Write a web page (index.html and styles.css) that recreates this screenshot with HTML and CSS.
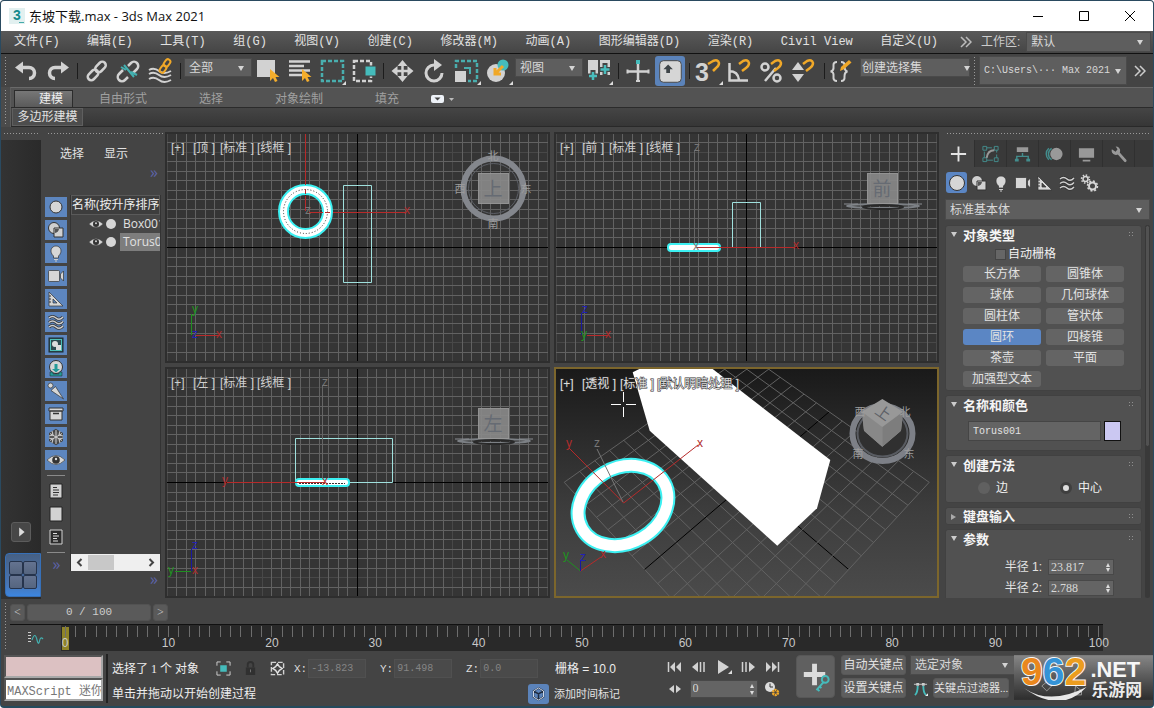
FILE: index.html
```html
<!DOCTYPE html>
<html lang="zh-CN">
<head>
<meta charset="utf-8">
<title>东坡下载.max - 3ds Max 2021</title>
<link rel="stylesheet" href="styles.css">
</head>
<body>
<svg class="defs" aria-hidden="true">
  <defs>
    <symbol id="flyout" viewBox="0 0 32 32"><path d="M30 26v4h-4z" fill="#ddd"/></symbol>
    <symbol id="sphere" viewBox="0 0 20 20"><circle cx="10" cy="10" r="6" fill="#d6d6d6" stroke="#333"/></symbol>
    <symbol id="shapes" viewBox="0 0 20 20"><circle cx="8" cy="8" r="5.500" fill="#d0d0d0" stroke="#333"/><path d="M8 8h9v9H8z" fill="#d0d0d0" stroke="#333"/><path d="M9 9h4a5 5 0 0 1-4 4z" fill="#555"/></symbol>
    <symbol id="bulb" viewBox="0 0 20 20"><path d="M7.500 15v-2C3 9 5 3 10 3s7 6 2.500 10v2z" fill="#d6d6d6" stroke="#333" stroke-width=".7"/><path d="M8 16.500h4M9 18h2" stroke="#ccc" stroke-width="1.200"/></symbol>
    <symbol id="camera" viewBox="0 0 20 20"><rect x="2.500" y="4.500" width="11" height="11" rx="1" fill="#d6d6d6" stroke="#333" stroke-width=".7"/><path d="M14.500 8l3-3v10l-3-3z" fill="#d6d6d6" stroke="#333" stroke-width=".7"/></symbol>
    <symbol id="ruler" viewBox="0 0 20 20"><path d="M3 3l14 14H3zM7 10v4h4z" fill="#d6d6d6" fill-rule="evenodd" stroke="#333" stroke-width=".7"/><path d="M3 7h2M3 10h2M3 13h2" stroke="#333"/></symbol>
    <symbol id="waves" viewBox="0 0 20 20"><path d="M3 6q3.500-3 7 0t7-1M3 10.500q3.500-3 7 0t7-1M3 15q3.500-3 7 0t7-1" fill="none" stroke="#333" stroke-width="3"/><path d="M3 6q3.500-3 7 0t7-1M3 10.500q3.500-3 7 0t7-1M3 15q3.500-3 7 0t7-1" fill="none" stroke="#d0d0d0" stroke-width="1.500"/></symbol>
    <symbol id="gears" viewBox="0 0 20 20"><circle cx="6.500" cy="6" r="2.500" fill="none" stroke="#d6d6d6" stroke-width="1.500"/><circle cx="6.500" cy="6" r="4" fill="none" stroke="#d6d6d6" stroke-width="1.500" stroke-dasharray="1.500 1.600"/><circle cx="13.500" cy="13" r="3.500" fill="none" stroke="#d6d6d6" stroke-width="2"/><circle cx="13.500" cy="13" r="5" fill="none" stroke="#d6d6d6" stroke-width="1.500" stroke-dasharray="2 1.900"/></symbol>
    <symbol id="group" viewBox="0 0 20 20"><rect x="3" y="3" width="14" height="14" fill="#2e4b50" stroke="#1c2c30"/><rect x="4.500" y="4.500" width="11" height="11" fill="none" stroke="#4fc0b8"/><circle cx="9" cy="9" r="3" fill="#ddd"/><path d="M10 10h5v5h-5z" fill="#ddd"/></symbol>
    <symbol id="xref" viewBox="0 0 20 20"><circle cx="10" cy="9" r="6.500" fill="#d6d6d6" stroke="#333"/><path d="M8.500 6h3v5h2.500L10 14.500 6 11h2.500z" fill="#249a98"/><path d="M4 14h3v2h6v-2h3v4H4z" fill="#249a98" stroke="#222" stroke-width=".5"/></symbol>
    <symbol id="bone" viewBox="0 0 20 20"><circle cx="4.500" cy="4.500" r="2.500" fill="#d6d6d6" stroke="#333" stroke-width=".7"/><path d="M5 9.500l4.500-4L17.500 18z" fill="#d6d6d6" stroke="#333" stroke-width=".7"/></symbol>
    <symbol id="box" viewBox="0 0 20 20"><path d="M4 7h12v9H4zM3 4h14v3H3z" fill="#d6d6d6" stroke="#333"/><path d="M7 9.500h6" stroke="#333" stroke-width="1.500"/></symbol>
    <symbol id="flake" viewBox="0 0 20 20"><path d="M10 3l6 3.500v7L10 17l-6-3.500v-7z" fill="#555" stroke="#444" stroke-width="2"/><path d="M10 3v14M4 6.500l12 7M16 6.500l-12 7M6 4l1 4-4 1M14 4l-1 4 4 1M6 16l1-4-4-1M14 16l-1-4 4-1" stroke="#d0d0d0" fill="none"/></symbol>
    <symbol id="eye" viewBox="0 0 20 20"><path d="M1 10q9-9 18 0-9 9-18 0z" fill="#d6d6d6" stroke="#444" stroke-width=".7"/><circle cx="10" cy="10" r="3.800" fill="#333"/><circle cx="10" cy="9" r="1.200" fill="#ddd"/></symbol>
    <symbol id="compass" viewBox="0 0 82 16"><ellipse cx="41" cy="7" rx="36" ry="2" fill="none" stroke="#7c8085" stroke-width="2"/><ellipse cx="41" cy="8" rx="20" ry="2" fill="none" stroke="#292929" stroke-width="2"/><path d="M2 5h14M66 5h14" stroke="#8a8d92"/></symbol>
  </defs>
</svg>

<div class="window">
  <header class="titlebar">
    <svg class="logo" viewBox="0 0 16 16"><rect width="16" height="16" fill="#e2f0f0"/><text x="8" y="12" text-anchor="middle" font-family="Liberation Sans" font-weight="700" font-size="14" fill="#138a8c">3</text><path d="M10 14.500h5" stroke="#4aa"/></svg>
    <h1>东坡下载.max - 3ds Max 2021</h1>
    <button class="win-btn" aria-label="最小化"><svg viewBox="0 0 12 12"><path d="M1 6.500h10" stroke="#000"/></svg></button>
    <button class="win-btn" aria-label="最大化"><svg viewBox="0 0 12 12"><path d="M1.500 1.500h9v9h-9z" fill="none" stroke="#000"/></svg></button>
    <button class="win-btn" aria-label="关闭"><svg viewBox="0 0 12 12"><path d="M1 1l10 10M11 1L1 11" stroke="#000"/></svg></button>
  </header>

  <div class="menubar">
    <nav class="menus"><a href="#">文件(F)</a><a href="#">编辑(E)</a><a href="#">工具(T)</a><a href="#">组(G)</a><a href="#">视图(V)</a><a href="#">创建(C)</a><a href="#">修改器(M)</a><a href="#">动画(A)</a><a href="#">图形编辑器(D)</a><a href="#">渲染(R)</a><a href="#">Civil View</a><a href="#">自定义(U)</a></nav>
    <div class="workspace">
      <svg class="chev" viewBox="0 0 12 12"><path d="M1 1l5 5-5 5M6 1l5 5-5 5" fill="none" stroke="#bbb" stroke-width="1.500"/></svg>
      <label for="ws">工作区:</label>
      <span class="pick"><select id="ws"><option>默认</option></select></span>
    </div>
  </div>

  <div class="toolbar">
    <i class="grip-v"></i>
    <button class="tool" aria-label="撤销"><svg viewBox="0 0 32 32"><path d="M9 12.500h10a5 5 0 0 1 0 11" fill="none" stroke="#d2d2d2" stroke-width="3.500"/><path d="M5 12.500l8-6v12z" fill="#d2d2d2"/></svg></button>
    <button class="tool" aria-label="重做"><svg viewBox="0 0 32 32"><path d="M23 12.500H13a5 5 0 0 0 0 11" fill="none" stroke="#d2d2d2" stroke-width="3.500"/><path d="M27 12.500l-8-6v12z" fill="#d2d2d2"/></svg></button>
    <i class="sep"></i>
    <button class="tool" aria-label="链接"><svg viewBox="0 0 32 32"><g fill="none" stroke="#d2d2d2" stroke-width="2.500"><rect x="-6" y="-3.500" width="12" height="7" rx="3.500" transform="translate(19.500 12) rotate(-45)"/><rect x="-6" y="-3.500" width="12" height="7" rx="3.500" transform="translate(12 20) rotate(-45)"/></g></svg></button>
    <button class="tool" aria-label="取消链接"><svg viewBox="0 0 32 32"><path d="M15 11l3-3a4 4 0 0 1 6 6l-4 4M15 22l-3 3a4 4 0 0 1-6-6l4-4" fill="none" stroke="#d2d2d2" stroke-width="2.500"/><path d="M11 10l10 12M8 12l5 3M18 17l6 3" stroke="#43b0b0" stroke-width="2"/></svg></button>
    <button class="tool" aria-label="绑定到空间扭曲"><svg viewBox="0 0 32 32"><path d="M4 15q5-3 10 1t12 0M4 19q5-3 10 1t12 0M4 24q5-3 10 1t12 0" fill="none" stroke="#d2d2d2" stroke-width="2"/><g fill="none" stroke="#f0a828" stroke-width="2"><rect x="-4" y="-2.500" width="8" height="5" rx="2.500" transform="translate(22 8) rotate(-55)"/><rect x="-4" y="-2.500" width="8" height="5" rx="2.500" transform="translate(18 14) rotate(-55)"/></g></svg></button>
    <i class="sep"></i>
    <span class="pick pick-tool"><select aria-label="选择过滤器"><option>全部</option></select></span>
    <button class="tool" aria-label="选择对象"><svg viewBox="0 0 32 32"><path d="M5 5h18v17H5z" fill="#d2d2d2"/><path d="M18 14v12l3-3 2 4 2.500-1-2-4h4z" fill="#f5ae2c"/></svg></button>
    <button class="tool" aria-label="按名称选择"><svg viewBox="0 0 32 32"><path d="M5 6.500h21M5 11h15M5 15.500h21M5 20h15" stroke="#d2d2d2" stroke-width="2.500"/><path d="M18 14v12l3-3 2 4 2.500-1-2-4h4z" fill="#f5ae2c"/></svg></button>
    <button class="tool" aria-label="矩形选择区域"><svg viewBox="0 0 32 32"><path d="M6 6h21v20H6z" fill="none" stroke="#49aeae" stroke-width="2.500" stroke-dasharray="4 2"/><use href="#flyout"/></svg></button>
    <button class="tool" aria-label="窗口/交叉"><svg viewBox="0 0 32 32"><path d="M6 6h17v20H6z" fill="none" stroke="#d2d2d2" stroke-width="2.500" stroke-dasharray="4 2"/><path d="M17 11h11v10H17z" fill="#45bcbc" stroke="#444"/></svg></button>
    <i class="sep"></i>
    <button class="tool" aria-label="移动"><svg viewBox="0 0 32 32"><path d="M7 16h17M15.500 8v17" stroke="#d2d2d2" stroke-width="2.500"/><path d="M15.500 5l5 6h-10zM15.500 27l5-6h-10zM4.500 16l6-5v10zM26.500 16l-6-5v10z" fill="#d2d2d2"/></svg></button>
    <button class="tool" aria-label="旋转"><svg viewBox="0 0 32 32"><path d="M15 10a8 8 0 1 0 8 8" fill="none" stroke="#d2d2d2" stroke-width="3"/><path d="M15 4l8 6-8 6z" fill="#d2d2d2"/></svg></button>
    <button class="tool" aria-label="缩放"><svg viewBox="0 0 32 32"><path d="M5 13V6h21v20h-9" fill="none" stroke="#49aeae" stroke-width="2.500" stroke-dasharray="4 2"/><path d="M4 16h11v11H4z" fill="#d2d2d2"/><path d="M13 13h6v6" fill="none" stroke="#49aeae" stroke-width="2"/><use href="#flyout"/></svg></button>
    <button class="tool" aria-label="放置"><svg viewBox="0 0 32 32"><circle cx="13" cy="18" r="9" fill="#d2d2d2"/><circle cx="20" cy="10" r="5.500" fill="#45bcbc"/><path d="M20 11l-7 7M12 13v6h6" fill="none" stroke="#f0a828" stroke-width="3"/><use href="#flyout"/></svg></button>
    <span class="pick pick-tool"><select aria-label="参考坐标系"><option>视图</option></select></span>
    <button class="tool" aria-label="使用轴点中心"><svg viewBox="0 0 32 32"><path d="M5 5h10v15H5zM17 5h10v15H17z" fill="#d2d2d2"/><path d="M10 15v13M4 21h12M22 8v13M16 14.500h12" stroke="#444" stroke-width="5"/><path d="M10 17v8M6 21h8M22 10v9M17.500 14.500h9" stroke="#49bcbc" stroke-width="2.500"/><use href="#flyout"/></svg></button>
    <i class="sep"></i>
    <button class="tool" aria-label="选择并操纵"><svg viewBox="0 0 32 32"><path d="M5 16.500h22M16 9v18" stroke="#d2d2d2" stroke-width="2.500"/><path d="M4.500 14.500h2v4h-2zM25.500 14.500h2v4h-2zM14 25h4v2h-4z" fill="#d2d2d2"/><path d="M14 5h4v4h-4z" fill="#45bcbc"/></svg></button>
    <button class="tool on" aria-label="键盘快捷键覆盖"><svg viewBox="0 0 32 32"><rect x="5" y="5" width="23" height="23" rx="4" fill="#d6d6d6" stroke="#444"/><path d="M14 9l5 5h-3v4h-4v-4H9z" fill="#3e4448"/></svg></button>
    <i class="sep"></i>
    <button class="tool" aria-label="捕捉开关"><svg viewBox="0 0 32 32"><text x="2" y="26" font-family="Liberation Sans" font-weight="700" font-size="25" fill="#d2d2d2">3</text><path d="M15 9l5-3q5-2 6 2 0 3-3 5l-3 3" fill="none" stroke="#f0a828" stroke-width="2.500"/><use href="#flyout"/></svg></button>
    <button class="tool" aria-label="角度捕捉"><svg viewBox="0 0 32 32"><path d="M4.500 8v17.500H23M4 16q9 0 10 9" fill="none" stroke="#d2d2d2" stroke-width="2.500"/><path d="M14 9l4-3q5-2 6 2 0 3-3 5l-4 3" fill="none" stroke="#f0a828" stroke-width="2.500"/></svg></button>
    <button class="tool" aria-label="百分比捕捉"><svg viewBox="0 0 32 32"><circle cx="8" cy="12" r="3.500" fill="none" stroke="#d2d2d2" stroke-width="2.500"/><circle cx="20" cy="23" r="3.500" fill="none" stroke="#d2d2d2" stroke-width="2.500"/><path d="M8 26L19 13" stroke="#d2d2d2" stroke-width="2.500"/><path d="M14 9l4-3q5-2 6 2 0 3-3 5l-4 3" fill="none" stroke="#f0a828" stroke-width="2.500"/></svg></button>
    <button class="tool" aria-label="微调器捕捉"><svg viewBox="0 0 32 32"><path d="M3 15l6-8 6 8zM3 19l6 8 6-8z" fill="#d2d2d2"/><path d="M14 9l4-3q5-2 6 2 0 3-3 5l-4 3" fill="none" stroke="#f0a828" stroke-width="2.500"/></svg></button>
    <i class="sep"></i>
    <button class="tool" aria-label="编辑命名选择集"><svg viewBox="0 0 32 32"><path d="M9 7q-4 0-3.500 4 .5 5-3 5.500 3.500 0 3 5Q5 26 9 26M13 7q4 0 3.500 4 0 5 3 5.500-3 .5-3 5 .5 4.500-3.500 4.500" fill="none" stroke="#d2d2d2" stroke-width="2"/><path d="M12 16l1-4 8-7 2.500 2.500-8 7z" fill="#f0a828"/></svg></button>
    <span class="pick pick-set"><select aria-label="命名选择集"><option>创建选择集</option></select></span>
    <i class="grip-v"></i>
    <span class="pick pick-path"><select aria-label="项目路径"><option>C:\Users\··· Max 2021</option></select></span>
    <button class="more" aria-label="更多"><svg class="chev" viewBox="0 0 12 12"><path d="M1 1l5 5-5 5M6 1l5 5-5 5" fill="none" stroke="#ccc" stroke-width="1.500"/></svg></button>
  </div>

  <section class="ribbon">
    <i class="grip-v"></i>
    <div class="ribbon-body">
      <div class="ribbon-tabs">
        <button class="rtab active">建模</button><button class="rtab">自由形式</button><button class="rtab">选择</button><button class="rtab">对象绘制</button><button class="rtab">填充</button>
        <button class="rmin" aria-label="最小化功能区"><svg viewBox="0 0 26 10"><rect x="1" y="1" width="13" height="8" rx="2" fill="#eef2f8"/><path d="M4.500 3.500h6l-3 3z" fill="#444"/><path d="M19 4h5l-2.500 3z" fill="#bbb"/></svg></button>
      </div>
      <div class="ribbon-panel"><button>多边形建模</button></div>
    </div>
  </section>

  <main class="work">
    <aside class="strip">
      <i class="grip-h"></i>
      <div class="strip-body">
        <button class="play" aria-label="展开"><svg viewBox="0 0 20 20"><path d="M8 5l6 5-6 5z" fill="#ddd"/></svg></button>
        <button class="layout" aria-label="视口布局"><i></i><i></i><i></i><i></i></button>
      </div>
    </aside>

    <aside class="explorer">
      <i class="grip-h"></i>
      <div class="ex-menu"><a href="#">选择</a><a href="#">显示</a></div>
      <div class="ex-more">»</div>
      <div class="ex-main">
        <div class="ex-icons">
          <button class="on" aria-label="几何体"><svg><use href="#sphere"/></svg></button>
          <button class="on" aria-label="图形"><svg><use href="#shapes"/></svg></button>
          <button class="on" aria-label="灯光"><svg><use href="#bulb"/></svg></button>
          <button class="on" aria-label="摄影机"><svg><use href="#camera"/></svg></button>
          <button class="on" aria-label="辅助对象"><svg><use href="#ruler"/></svg></button>
          <button class="on" aria-label="空间扭曲"><svg><use href="#waves"/></svg></button>
          <button class="on" aria-label="组"><svg><use href="#group"/></svg></button>
          <button class="on" aria-label="外部参照"><svg><use href="#xref"/></svg></button>
          <button class="on" aria-label="骨骼"><svg><use href="#bone"/></svg></button>
          <button class="on" aria-label="容器"><svg><use href="#box"/></svg></button>
          <button class="on" aria-label="冻结"><svg><use href="#flake"/></svg></button>
          <button class="on" aria-label="隐藏"><svg><use href="#eye"/></svg></button>
          <hr>
          <button aria-label="全部显示"><svg viewBox="0 0 20 20"><path d="M4 3h12v14H4z" fill="#d2d2d2" stroke="#222"/><path d="M7 6.500h4M7 9h6M7 11.500h6M7 14h5" stroke="#333"/></svg></button>
          <button aria-label="不显示"><svg viewBox="0 0 20 20"><path d="M4 3h12v14H4z" fill="#d2d2d2" stroke="#222"/></svg></button>
          <button aria-label="反转显示"><svg viewBox="0 0 20 20"><path d="M4 3h12v14H4z" fill="#2c2c2c" stroke="#d2d2d2"/><path d="M7 6.500h4M7 9h6M7 11.500h4M7 14h5" stroke="#ddd"/></svg></button>
          <hr>
          <span class="ex-chev">»</span>
        </div>
        <div class="ex-list">
          <div class="ex-head">名称(按升序排序)</div>
          <ul>
            <li><svg class="see"><use href="#eye"/></svg><i class="dot"></i><span>Box001</span></li>
            <li class="sel"><svg class="see"><use href="#eye"/></svg><i class="dot"></i><span>Torus001</span></li>
          </ul>
          <div class="hscroll"><button aria-label="左"><svg viewBox="0 0 9 9"><path d="M6.500 1L3 4.500 6.500 8" fill="none" stroke="#444" stroke-width="2"/></svg></button><i></i><button aria-label="右"><svg viewBox="0 0 9 9"><path d="M2.500 1L6 4.500 2.500 8" fill="none" stroke="#444" stroke-width="2"/></svg></button></div>
        </div>
      </div>
      <div class="ex-more low">»</div>
    </aside>

    <section class="views">
      <svg class="view" viewBox="0 0 385 231" preserveAspectRatio="xMidYMid slice">
        <g class="ortho"></g>
        <g class="vc"><circle cx="328.500" cy="56.500" r="30" fill="none" stroke="#84878d" stroke-width="6"/><circle cx="328.500" cy="56.500" r="25" fill="none" stroke="#5c5f66" stroke-width="1"/><rect class="cube" x="313.500" y="41.500" width="30" height="30"/><text class="face" x="328" y="64">上</text><text x="328" y="28">北</text><text x="328" y="96">南</text><text x="295" y="61">西</text><text x="361" y="61">东</text></g>
        <path class="wire" d="M178.500 53.500h28v97h-28z"/>
        <circle cx="140.500" cy="79.500" r="22" fill="none" stroke="#3cf0f2" stroke-width="11"/><circle cx="140.500" cy="79.500" r="22" fill="none" stroke="#fff" stroke-width="7"/><circle cx="140.500" cy="79.500" r="22" fill="none" stroke="#333" stroke-dasharray="1 2"/>
        <path class="red" d="M140.500 2v51M140.500 57v5M140.500 64v15M144 80.500h14M160 80.500h5M168 80.500h73"/><text class="ax r" x="239" y="82">x</text><text class="ax g" x="140" y="82">z</text>
        <path class="grn" d="M26.500 182v21"/><path class="red" d="M31 203.500h23"/><text class="ax n" x="27" y="181">y</text><text class="ax b" x="27" y="206">z</text><text class="ax r" x="51" y="206">x</text>
        <text class="vl" y="20"><tspan x="6">[+]</tspan><tspan x="28">[顶 ]</tspan><tspan x="55">[标准 ]</tspan><tspan x="92">[线框 ]</tspan></text>
      </svg>
      <svg class="view" viewBox="0 0 385 231" preserveAspectRatio="xMidYMid slice">
        <g class="ortho"></g>
        <g class="vc"><use href="#compass" x="288" y="67" width="82" height="16"/><rect class="cube" x="313.500" y="41.500" width="30" height="30"/><text class="face" x="328" y="64">前</text></g>
        <path class="wire" d="M178.500 115V70.500h28V115"/>
        <path d="M140.500 18v94" stroke="#666"/><text class="ax g" x="140" y="19">z</text>
        <rect x="114" y="112" width="52" height="7" rx="3" fill="#fff" stroke="#3cf0f2" stroke-width="2"/>
        <path class="red" d="M142 115.500h99"/><text class="ax r" x="239" y="117">x</text><text class="ax g" x="139" y="118">x</text>
        <path d="M27.500 181v22" stroke="#1818a0"/><path class="red" d="M33 203.500h21"/><text class="ax b" x="28" y="181">z</text><text class="ax n" x="27" y="206">y</text><text class="ax r" x="51" y="206">x</text>
        <text class="vl" y="20"><tspan x="6">[+]</tspan><tspan x="28">[前 ]</tspan><tspan x="55">[标准 ]</tspan><tspan x="92">[线框 ]</tspan></text>
      </svg>
      <svg class="view" viewBox="0 0 385 231" preserveAspectRatio="xMidYMid slice">
        <g class="ortho"></g>
        <g class="vc"><use href="#compass" x="288" y="67" width="82" height="16"/><rect class="cube" x="313.500" y="41.500" width="30" height="30"/><text class="face" x="328" y="64">左</text></g>
        <path class="wire" d="M130.500 71.500h97v44h-97z"/>
        <path d="M157.500 18v94" stroke="#666"/><text class="ax g" x="157" y="19">z</text>
        <rect x="131" y="112" width="53" height="7" rx="3" fill="#fff" stroke="#3cf0f2" stroke-width="2"/><path d="M134 116.500h46" stroke="#333" stroke-dasharray="2 1"/>
        <path class="red" d="M62 115.500h98"/><text class="ax r" x="57" y="117">y</text><text class="ax r" x="157" y="118">x</text>
        <path d="M26.500 182v22" stroke="#1818a0"/><path class="grn" d="M10 204.500h16"/><text class="ax b" x="27" y="182">z</text><text class="ax n" x="3" y="207">y</text><text class="ax r" x="27" y="207">x</text>
        <text class="vl" y="20"><tspan x="6">[+]</tspan><tspan x="28">[左 ]</tspan><tspan x="55">[标准 ]</tspan><tspan x="92">[线框 ]</tspan></text>
      </svg>
      <svg class="view current" viewBox="0 0 385 231" preserveAspectRatio="xMidYMid slice">
        <defs><linearGradient id="sky" x2="0" y2="1"><stop stop-color="#191919"/><stop offset=".6" stop-color="#3c3c3c"/><stop offset="1" stop-color="#4b4b4b"/></linearGradient></defs>
        <rect width="385" height="231" fill="url(#sky)"/>
        <g id="persp"></g>
        <path d="M78.700 5.300L85.300 2h73.400L276.300 93 263 141.300l-39.700 37.400L95.700 63.700z" fill="#fff"/>
        <g fill="none" transform="rotate(-30 69 138.500)"><path d="M15.500 138.500a53.500 44 0 1 1 107 0a53.500 44 0 1 1-107 0zM28.500 138.500a40.500 31 0 1 0 81 0a40.500 31 0 1 0-81 0z" fill="#fff" fill-rule="evenodd" stroke="#3cf0f2" stroke-width="2"/></g>
        <path class="red" d="M15 81l54.700 55L144 78"/><path d="M43 82l26 53" stroke="#777"/>
        <text class="ax r" x="12" y="80">y</text><text class="ax g" x="40" y="80">z</text><text class="ax r" x="143" y="80">x</text>
        <path class="grn" d="M26.500 204L13 193"/><path class="red" d="M26.500 204L47 190"/><path d="M26.500 204v-11" stroke="#1818a0"/>
        <text class="ax n" x="9" y="192">y</text><text class="ax b" x="26" y="194">z</text><text class="ax r" x="46" y="191">x</text>
        <ellipse cx="328.500" cy="66.500" rx="25" ry="23" fill="#303030" stroke="#595c62" stroke-width="2"/><ellipse cx="328.500" cy="66.500" rx="30" ry="27.500" fill="none" stroke="#7d8087" stroke-width="6"/>
        <path d="M328.300 32l20.700 12.700-2 19-18.700 16-18.300-16-2-19z" fill="#989898"/><path d="M308 44.700l20.300 15.300v19.700L310 63.700z" fill="#888"/><path d="M349 44.700L328.300 60v19.700l18.700-16z" fill="#7d7d7d"/>
        <g class="vc"><text x="306" y="49">西</text><text x="351" y="49">北</text><text x="304" y="91">南</text><text x="355" y="91">东</text><text class="top" x="0" y="5" transform="translate(329 46) rotate(35)">上</text></g>
        <g fill="none" stroke="#222" stroke-width="3"><path d="M57 37.500h10M72 37.500h10M69.500 25v10M69.500 40v10"/></g><path d="M57 37.500h10M72 37.500h10M69.500 25v10M69.500 40v10" stroke="#fff"/>
        <text class="vl hard" y="21"><tspan x="6">[+]</tspan><tspan x="28">[透视 ]</tspan><tspan x="66">[标准 ]</tspan><tspan x="103">[默认明暗处理 ]</tspan></text>
      </svg>
    </section>

    <aside class="command">
      <i class="grip-h"></i>
      <div class="cmd-tabs">
        <button class="active" aria-label="创建"><svg viewBox="0 0 20 20"><path d="M10 2v16M2 10h16" stroke="#e4e4e4" stroke-width="2"/></svg></button>
        <button aria-label="修改"><svg viewBox="0 0 20 20"><path d="M3.500 3.500h13v13h-13z" fill="none" stroke="#438d8d" stroke-dasharray="8 2"/><path d="M2 2h4v4H2zM14 2h4v4h-4zM2 14h4v4H2zM14 14h4v4h-4z" fill="#3a3a3a" stroke="#438d8d"/><path d="M6 14q1-8 8-8" fill="none" stroke="#999" stroke-width="2"/></svg></button>
        <button aria-label="层次"><svg viewBox="0 0 20 20"><path d="M4 3h12v5H4z" fill="#999"/><path d="M10 9v3M4 16v-3.500h12V16" fill="none" stroke="#438d8d" stroke-width="1.500"/><path d="M2 15h4v3H2zM14 15h4v3h-4z" fill="#438d8d"/></svg></button>
        <button aria-label="运动"><svg viewBox="0 0 20 20"><circle cx="12" cy="10" r="6.500" fill="#999"/><path d="M7 4a7 7 0 0 0 0 12M4 4a8 8 0 0 0 0 12" fill="none" stroke="#438d8d" stroke-width="1.500"/></svg></button>
        <button aria-label="显示"><svg viewBox="0 0 20 20"><path d="M2 4h16v10H2zM6 16h8v2H6z" fill="#999"/></svg></button>
        <button aria-label="实用程序"><svg viewBox="0 0 20 20"><path d="M9 8l8 9" stroke="#999" stroke-width="3" stroke-linecap="round"/><path d="M3 5a4.500 4.500 0 1 0 4-3l2 3-2 2.500z" fill="#999"/></svg></button>
      </div>
      <div class="cmd-cats">
        <button class="on" aria-label="几何体"><svg viewBox="0 0 20 20"><circle cx="10" cy="10" r="7.500" fill="#d6d6d6" stroke="#333"/></svg></button>
        <button aria-label="图形"><svg><use href="#shapes"/></svg></button>
        <button aria-label="灯光"><svg><use href="#bulb"/></svg></button>
        <button aria-label="摄影机"><svg><use href="#camera"/></svg></button>
        <button aria-label="辅助对象"><svg><use href="#ruler"/></svg></button>
        <button aria-label="空间扭曲"><svg><use href="#waves"/></svg></button>
        <button aria-label="系统"><svg><use href="#gears"/></svg></button>
      </div>
      <span class="pick pick-cat"><select aria-label="类别"><option>标准基本体</option></select></span>
      <div class="cmd-scroll">
        <div class="rollouts">
          <section class="rollout">
            <h2>对象类型</h2>
            <label class="auto"><input type="checkbox">自动栅格</label>
            <div class="prims"><button>长方体</button><button>圆锥体</button><button>球体</button><button>几何球体</button><button>圆柱体</button><button>管状体</button><button class="on">圆环</button><button>四棱锥</button><button>茶壶</button><button>平面</button><button>加强型文本</button></div>
          </section>
          <section class="rollout">
            <h2>名称和颜色</h2>
            <div class="name-row"><input type="text" value="Torus001" aria-label="名称"><button aria-label="颜色"></button></div>
          </section>
          <section class="rollout">
            <h2>创建方法</h2>
            <div class="radios"><label><input type="radio" name="m">边</label><label><input type="radio" name="m" checked>中心</label></div>
          </section>
          <section class="rollout shut"><h2>键盘输入</h2></section>
          <section class="rollout last">
            <h2>参数</h2>
            <div class="params">
              <label for="r1">半径 1:</label><span class="spin"><input id="r1" type="text" value="23.817"></span>
              <label for="r2">半径 2:</label><span class="spin"><input id="r2" type="text" value="2.788"></span>
            </div>
          </section>
        </div>
        <div class="vbar"><i></i></div>
      </div>
    </aside>
  </main>

  <div class="time">
    <i class="grip-v"></i>
    <div class="slider"><button aria-label="上一帧">&lt;</button><button class="thumb">0 / 100</button><button aria-label="下一帧">&gt;</button></div>
    <div class="track">
      <button class="curve" aria-label="曲线编辑器"><svg viewBox="0 0 18 14"><path d="M2.500 1v12" stroke="#ccc" stroke-width="3" stroke-dasharray="1 2"/><path d="M5 9q3-9 5 0 1.500 6 2.500 1t3.500-2" fill="none" stroke="#43b0b0" stroke-width="1.200"/></svg></button>
      <svg class="ticks" id="ticks"></svg>
    </div>
  </div>

  <footer class="status">
    <div class="listener"><div class="rec"></div><input type="text" value="MAXScript 迷你" aria-label="侦听器"></div>
    <div class="info">
      <div class="row">
        <span class="selinfo">选择了 1 个 对象</span>
        <svg class="ico" viewBox="0 0 16 16"><path d="M1 5V1h4M11 1h4v4M15 11v4h-4M5 15H1v-4" fill="none" stroke="#d2d2d2"/><path d="M4.500 4.500h7v7h-7z" fill="#45bcbc"/></svg>
        <svg class="ico" viewBox="0 0 16 16"><path d="M3 7h10v8H3z" fill="#303030"/><path d="M5 7V4q0-3 3-3t3 3v3" fill="none" stroke="#303030" stroke-width="2"/><path d="M8 9v3" stroke="#777"/></svg>
        <svg class="ico" viewBox="0 0 16 16"><path d="M1.500 1.500h13v13h-13z" fill="none" stroke="#d2d2d2" stroke-width="1.500" stroke-dasharray="5 2"/><path d="M8 3l2 3 3 2-3 2-2 3-2-3-3-2 3-2z" fill="none" stroke="#e2e2e2" stroke-width="1.500"/></svg>
        <label>X: <input type="text" value="-13.823"></label><label>Y: <input type="text" value="91.498"></label><label>Z: <input type="text" value="0.0"></label>
        <span class="grid">栅格 = 10.0</span>
      </div>
      <div class="row">
        <span class="prompt">单击并拖动以开始创建过程</span>
        <button class="tagbtn" aria-label="时间标记"><svg viewBox="0 0 20 20"><path d="M10 4l5 3v6l-5 3-5-3V7zM5 7l5 3 5-3M10 10v6" fill="none" stroke="#1f2c40" stroke-width="1.500"/><path d="M10 4l5 3v6l-5 3-5-3V7z" fill="none" stroke="#cdd6e4"/></svg></button>
        <a class="tag" href="#">添加时间标记</a>
      </div>
    </div>
    <div class="playback">
      <div class="row">
        <button aria-label="转至开头"><svg viewBox="0 0 16 16"><path d="M1.500 3v10" stroke="#d2d2d2" stroke-width="1.500"/><path d="M8 3v10L3 8zM14 3v10L9 8z" fill="#d2d2d2"/></svg></button>
        <button aria-label="上一帧"><svg viewBox="0 0 16 16"><path d="M7 3v10L1 8z" fill="#d2d2d2"/><path d="M9.500 3v10M13 3v10" stroke="#d2d2d2" stroke-width="1.500"/></svg></button>
        <button aria-label="播放"><svg viewBox="0 0 16 16"><path d="M2 1v14l11-7z" fill="#d2d2d2"/><path d="M16 11v4h-4z" fill="#ddd"/></svg></button>
        <button aria-label="下一帧"><svg viewBox="0 0 16 16"><path d="M9 3v10l6-5z" fill="#d2d2d2"/><path d="M2.500 3v10M6 3v10" stroke="#d2d2d2" stroke-width="1.500"/></svg></button>
        <button aria-label="转至结尾"><svg viewBox="0 0 16 16"><path d="M14.500 3v10" stroke="#d2d2d2" stroke-width="1.500"/><path d="M8 3v10l5-5zM2 3v10l5-5z" fill="#d2d2d2"/></svg></button>
      </div>
      <div class="row">
        <button aria-label="关键点模式"><svg viewBox="0 0 16 16"><path d="M7 4v8L2 8zM9 4v8l5-4z" fill="#d2d2d2"/></svg></button>
        <span class="spin frame"><input type="text" value="0" aria-label="当前帧"></span>
        <button aria-label="时间配置"><svg viewBox="0 0 16 16"><circle cx="6" cy="6" r="5" fill="#ddd"/><path d="M6 2.500V6h3" stroke="#333" fill="none"/><circle cx="11.500" cy="11.500" r="2.500" fill="#444" stroke="#f0a828" stroke-width="2.500" stroke-dasharray="2 .6"/></svg></button>
      </div>
    </div>
    <button class="bigkey" aria-label="设置关键点"><svg viewBox="0 0 38 42"><path d="M18 8v22M7 19h22" stroke="#dcdcdc" stroke-width="5"/><circle cx="29" cy="24" r="3.500" fill="none" stroke="#45bcbc" stroke-width="2"/><path d="M27 27l-7 8M21 34l2 2M23 31l2 2" stroke="#45bcbc" stroke-width="2"/></svg></button>
    <div class="keys"><button>自动关键点</button><button>设置关键点</button></div>
    <div class="filters">
      <span class="pick"><select aria-label="关键点集"><option>选定对象</option></select></span>
      <div class="row"><svg class="ico" viewBox="0 0 16 16"><path d="M2 15q3-2 3-10M14 15q-3-2-3-10" stroke="#45bcbc" fill="none" stroke-width="2"/><path d="M1 3.500h14" stroke="#ccc"/><path d="M3.500 2h3v3h-3zM9.500 2h3v3h-3z" fill="#ccc"/><path d="M16 13v3h-3z" fill="#eee"/></svg><button>关键点过滤器...</button></div>
    </div>
    <svg class="brand" viewBox="0 0 140 45">
      <defs><linearGradient id="plate" x2="0" y2="1"><stop stop-color="#8a8a8a"/><stop offset=".5" stop-color="#5a5a5a"/><stop offset="1" stop-color="#2d2d2d"/></linearGradient></defs>
      <rect width="140" height="45" fill="url(#plate)"/>
      <path d="M28 31l5-4 5 4-5 5zM62 31l6 5v4h-7z" fill="none" stroke="#999"/>
      <g font-family="Liberation Sans" font-weight="700"><g font-size="39" stroke="#fff" stroke-width="2" paint-order="stroke"><text x="7" y="30" fill="#f08a1c">9</text><text x="29" y="30" fill="#3597dc">6</text><text x="51" y="30" fill="#f3a11e">2</text></g><text x="77" y="22" font-size="22" fill="#fff">.NET</text></g>
      <path d="M10 33q26 18 63-1-26 28-63 1z" fill="#eee"/>
      <text x="78" y="41" font-family="Noto Sans CJK SC" font-weight="700" font-size="17" fill="#f2f2f2">乐游网</text>
    </svg>
  </footer>
</div>
<script src="scene.js"></script>
</body>
</html>
```
FILE: scene.js
```js
const NS = 'http://www.w3.org/2000/svg';

function add(parent, tag, attrs, text) {
  const node = document.createElementNS(NS, tag);
  for (const key in attrs) node.setAttribute(key, attrs[key]);
  if (text !== undefined) node.textContent = text;
  parent.appendChild(node);
  return node;
}

// Home grid of the orthographic viewports: every tenth line is dimmer.
document.querySelectorAll('.ortho').forEach(g => {
  const step = 9.52;
  let minor = '', major = '';
  for (let i = -20; i <= 20; i++) {
    if (i === 0) continue;
    const x = Math.round(192 + i * step) + 0.5;
    const y = Math.round(115 + i * step) + 0.5;
    let d = `M${x} 2V229`;
    if (y > 2 && y < 229) d += `M2 ${y}H383`;
    if (i % 10 === 0) major += d; else minor += d;
  }
  add(g, 'path', { d: major, stroke: '#484848' });
  add(g, 'path', { d: minor, stroke: '#626262' });
  add(g, 'path', { d: 'M192.5 2V229M2 115.5H383', stroke: '#000' });
});

// Perspective grid, 14 by 14 cells, seen along its diagonal.
const project = (i, j) => {
  const side = (i + j) / 14, depth = (i - j) / 14, w = 1 + 0.2114 * depth;
  return `${((584 + 547.5 * side / w) / 3 - 2).toFixed(1)} ${((352 - 393.2 * depth) / w / 3 - 2).toFixed(1)}`;
};
const persp = document.getElementById('persp');
for (let i = -7; i <= 7; i++) {
  const stroke = i === 0 ? '#000' : '#626262';
  add(persp, 'path', { d: `M${project(i, -7)}L${project(i, 7)}M${project(-7, i)}L${project(7, i)}`, stroke });
}

// Frame ticks and labels of the track bar.
const ticks = document.getElementById('ticks');
const at = f => (0.4 + f * 0.992).toFixed(3) + '%';
add(ticks, 'rect', { x: 1, y: 2, width: 7, height: 23, fill: '#8f8428' });
for (let f = 0; f <= 100; f++) {
  add(ticks, 'line', { x1: at(f), x2: at(f), y1: 1, y2: 12, stroke: '#6d6d6d' });
  if (f % 10 === 0) add(ticks, 'text', { x: at(f), y: 22, 'text-anchor': 'middle' }, f);
}
```
FILE: styles.css
```css
* { box-sizing: border-box; }
body { margin: 0; background: #fff; }
button, input, select { font: inherit; color: inherit; margin: 0; padding: 0; border: 0; border-radius: 0; background: none; }
a { color: inherit; text-decoration: none; }
i { display: block; flex: none; }
svg { display: block; flex: none; }
.defs { position: absolute; width: 0; height: 0; }

.window {
  min-height: 100vh; display: flex; flex-direction: column;
  border: 1px solid #2a4a60; border-bottom: 2px solid #244a5c; border-radius: 4px; overflow: hidden;
  background: #444; color: #e2e2e2;
  font: 12px/16px "Liberation Serif", "Noto Sans CJK SC", serif;
}

.titlebar { height: 30px; display: flex; align-items: center; background: #fff; color: #111; padding-left: 8px; }
.logo { width: 16px; height: 16px; margin-right: 4px; }
.titlebar h1 { flex: 1; margin: 0; font: 13px/16px "Open Sans", "Noto Sans CJK SC", sans-serif; }
.win-btn { width: 46px; height: 28px; display: grid; place-items: center; }
.win-btn svg { width: 12px; height: 12px; }

.menubar {
  height: 23px; display: flex; align-items: center; padding-left: 13px;
  background: linear-gradient(#595959, #454545); border-bottom: 1px solid #111; white-space: nowrap;
  font: 12px/18px "Liberation Mono", "Noto Sans CJK SC", monospace;
}
.menus { flex: 0 0 924px; display: flex; justify-content: space-between; }
.workspace { flex: 1; margin-left: 22px; display: flex; align-items: center; font-family: "Liberation Sans", "Noto Sans CJK SC", sans-serif; }
.chev { width: 12px; height: 12px; }
.workspace label { margin: 0 6px 0 9px; color: #ccc; }
.workspace .pick { flex: 1; height: 20px; margin-right: 2px; }

.pick { position: relative; display: block; background: #5e5e5e; border: 1px solid #4a4a4a; }
.pick select { display: block; width: 100%; height: 100%; padding-left: 4px; appearance: none; color: #d8d8d8; }
.pick::after { content: ""; position: absolute; right: 7px; top: calc(50% - 2px); border: 3px solid transparent; border-top: 5px solid #d4d4d4; border-bottom: 0; pointer-events: none; }

.grip-v { width: 9px; align-self: stretch; margin: 2px 0; background: radial-gradient(#999 1px, transparent 1px) 3px 0 / 3px 3px content-box; padding: 0 3px; }
.grip-h { height: 4px; margin: 5px 2px 4px; background: radial-gradient(#999 1px, transparent 1px) 0 0 / 3px 3px; }

.toolbar { height: 33px; display: flex; align-items: center; background: #444; white-space: nowrap; }
.tool { flex: none; width: 32px; height: 32px; }
.tool svg { width: 32px; height: 32px; }
.tool.on { padding: 1px; }
.tool.on svg { width: 30px; height: 30px; background: #5b83ba; border-radius: 3px; }
.sep { width: 7px; height: 16px; background: linear-gradient(#1c1c1c, #1c1c1c) center / 1px 100% no-repeat; }
.pick-tool { flex: none; width: 68px; height: 19px; margin-bottom: 6px; }
.pick-set { flex: none; width: 110px; height: 19px; margin-bottom: 6px; }
.pick-set select { padding-left: 1px; }
.pick-set::after { right: -1px; }
.pick-path { flex: none; width: 148px; height: 29px; font: 10px/16px "Liberation Mono", monospace; }
.pick-path::after { right: 5px; }
.more { flex: 1; display: grid; place-items: center; }

.ribbon { height: 40px; display: flex; background: #4b4b4b; }
.ribbon-body { flex: 1; border-top: 1px solid #6a6a6a; border-left: 1px solid #5d5d5d; }
.ribbon-tabs { height: 20px; display: flex; align-items: flex-end; background: #535353; border-bottom: 1px solid #2b2b2b; color: #a0a0a0; padding-left: 3px; }
.rtab { height: 17px; padding: 0 1px; margin-right: 50px; line-height: 16px; }
.rtab.active { width: 59px; padding-left: 16px; margin-right: 25px; background: linear-gradient(#777, #5a5a5a); border: 1px solid #2c2c2c; border-bottom: 0; color: #eee; }
.rmin { height: 17px; margin-left: -20px; }
.rmin svg { width: 26px; height: 10px; }
.ribbon-panel { height: 19px; background: linear-gradient(#454545, #363636); border-bottom: 1px solid #292929; }
.ribbon-panel button { height: 18px; width: 71px; margin-left: 1px; background: #4d4d4d; border: 1px solid #5f5f5f; line-height: 16px; }

.work { flex: 1; display: flex; min-height: 460px; }

.strip { width: 40px; display: flex; flex-direction: column; }
.strip-body { flex: 1; display: flex; flex-direction: column; justify-content: flex-end; align-items: flex-end; gap: 11px; background: linear-gradient(90deg, #333, #2a2a2a); padding-bottom: 2px; margin-bottom: 1px; }
.play { width: 20px; height: 20px; margin-right: 10px; background: #474747; border: 1px solid #5c5c5c; border-radius: 3px; }
.play svg { width: 18px; height: 18px; }
.layout { width: 36px; height: 44px; padding: 7px 3px; display: grid; grid-template: 1fr 1fr / 1fr 1fr; background: linear-gradient(#466084, #4a74b0 70%, #3c86e0); border-radius: 4px 0 0 4px; border: 1px solid #3670b8; }
.layout i { background: linear-gradient(#647390, #55657f); border: 1px solid #26344c; border-radius: 2px; }

.explorer { width: 124px; display: flex; flex-direction: column; padding-left: 4px; font-family: "Open Sans", "Noto Sans CJK SC", sans-serif; }
.ex-menu { display: flex; gap: 20px; padding: 6px 0 0 15px; }
.ex-more { text-align: right; color: #5c63a8; font-size: 16px; padding: 2px 7px 12px 0; line-height: 16px; }
.ex-main { flex: 1; display: flex; gap: 2px; padding-top: 3px; }
.ex-more.low { height: 29px; padding: 0 7px 0 0; }
.ex-icons { width: 23px; height: 366px; display: flex; flex-direction: column; gap: 3px; padding-top: 2px; }
.ex-icons button { width: 22px; height: 20px; flex: none; display: grid; place-items: center; }
.ex-icons button.on { background: #5d86bf; }
.ex-icons svg { width: 20px; height: 20px; }
.ex-icons hr { width: 18px; margin: 2px; border: 0; border-top: 1px solid #8a8a8a; }
.ex-chev { text-align: center; color: #5c63a8; font-size: 16px; line-height: 12px; }
.ex-list { width: 91px; display: flex; flex-direction: column; border: solid #333; border-width: 0 1px; }
.ex-head { height: 20px; overflow: hidden; white-space: nowrap; line-height: 18px; border: 1px solid #5a5a5a; background: #3d3d3d; color: #eee; }
.ex-list ul { margin: 0; padding: 0; list-style: none; flex: 1; overflow: hidden; }
.ex-list li { height: 18px; display: flex; align-items: center; padding-left: 17px; }
.see { width: 16px; height: 16px; }
.see use { width: 16px; height: 16px; }
.dot { width: 10px; height: 10px; margin: 0 4px 0 2px; border-radius: 50%; background: #d6d6d6; }
.ex-list li span { flex: 1; min-width: 0; overflow: hidden; white-space: nowrap; padding-left: 3px; line-height: 18px; background: #474747; }
.ex-list li.sel span { background: #7d7d7d; }
.hscroll { height: 17px; display: flex; align-items: center; background: #efefef; }
.hscroll button { width: 17px; height: 17px; display: grid; place-items: center; }
.hscroll svg { width: 9px; height: 9px; }
.hscroll i { width: 26px; height: 15px; background: #c8c8c8; margin-right: auto; }

.views { flex: 1; min-width: 0; display: grid; grid-template: 1fr 1fr / 1fr 1fr; gap: 4px; padding: 5px 0 2px; }
.view { width: 100%; height: 100%; min-height: 0; background: #353535; outline: 2px solid #2e2e2e; outline-offset: -2px; }
.view.current { outline-color: #7c662c; }
.view text { font-family: "Liberation Sans", "Noto Sans CJK SC", sans-serif; }
.vl { font-size: 12px; fill: #d0d0d0; }
.vl.hard { stroke: #333; stroke-width: 1px; paint-order: stroke; fill: #ddd; }
.ax { font-size: 12px; }
.ax.r { fill: #b02c2c; }
.ax.g { fill: #777; }
.ax.b { fill: #2020b8; }
.ax.n { fill: #1f9320; }
.red { fill: none; stroke: #b82a2a; }
.grn { fill: none; stroke: #1f8f20; }
.wire { fill: none; stroke: #9fe0dd; }
.vc text { text-anchor: middle; font-size: 11px; fill: #9c9c9c; }
.vc .face { font-size: 19px; fill: #666b73; }
.vc .top { font-size: 15px; fill: #5d6066; }
.cube { fill: #888; stroke: #9a9a9a; opacity: .92; }

.command { width: 214px; display: flex; flex-direction: column; padding-left: 5px; }
.cmd-tabs { height: 27px; display: flex; background: #393939; }
.cmd-tabs button { width: 32px; padding: 4px 6px 3px; border-right: 1px solid #303030; }
.cmd-tabs button.active { width: 31px; background: #444; padding-left: 5px; }
.cmd-tabs svg { width: 19px; height: 20px; }
.cmd-cats { display: flex; gap: 1px; padding: 5px 2px 6px; }
.cmd-cats button { width: 21px; height: 21px; border-radius: 3px; display: grid; place-items: center; }
.cmd-cats button.on { background: #5b86c4; }
.cmd-cats svg { width: 20px; height: 20px; }
.pick-cat { height: 21px; margin: 0 3px 5px 1px; }
.cmd-scroll { flex: 1 1 0; min-height: 0; display: flex; gap: 3px; padding: 0 3px 0 1px; margin-bottom: 2px; overflow: hidden; }
.rollouts { flex: 1; display: flex; flex-direction: column; gap: 4px; }
.rollout { background: #515151; border: 1px solid #414141; border-radius: 3px; padding-bottom: 3px; }
.rollout h2 { margin: 0; height: 18px; padding-left: 17px; font: 700 13px/18px "Noto Sans CJK SC", sans-serif; color: #f5f5f5; position: relative; }
.rollout h2::before { content: ""; position: absolute; left: 5px; top: 6px; border: 3px solid transparent; border-top: 5px solid #ccc; border-bottom: 0; }
.rollout.shut h2::before { border: 3px solid transparent; border-left: 5px solid #aaa; border-right: 0; }
.rollout h2::after { content: ""; position: absolute; right: 7px; top: 5px; width: 6px; height: 6px; background: radial-gradient(#aaa 1px, transparent 1px) 0 0 / 3px 3px; opacity: .7; }
.rollout.shut { padding-bottom: 0; }
.rollout.shut h2 { height: 16px; line-height: 16px; }
.auto { display: flex; align-items: center; gap: 2px; margin: 2px 0 4px 49px; line-height: 16px; color: #f0f0f0; }
.auto input { appearance: none; width: 11px; height: 11px; background: #666; border: 1px solid #444; }
.prims { display: grid; grid-template-columns: 78px 78px; gap: 5px; padding-left: 17px; }
.prims button { height: 16px; line-height: 15px; background: #646464; border-radius: 3px; color: #e2e2e2; }
.prims button.on { background: #5b86c4; }
.name-row { display: flex; gap: 3px; padding: 7px 20px 6px 22px; }
.name-row input { flex: 1; min-width: 0; height: 20px; padding-left: 4px; background: #646464; border: 1px solid #454545; font-family: "Liberation Mono", monospace; font-size: 10px; }
.name-row button { width: 17px; height: 20px; background: #cbc8f2; border: 1px solid #111; }
.radios { display: flex; gap: 52px; padding: 6px 0 3px 32px; color: #f0f0f0; }
.radios label { display: flex; align-items: center; gap: 6px; }
.radios input { appearance: none; width: 12px; height: 12px; border-radius: 50%; background: #606060; }
.radios input:checked { background: #ddd; border: 3px solid #3f3f3f; }
.rollout.last { padding-bottom: 0; height: 80px; flex: none; }
.params { display: grid; grid-template-columns: auto 66px; justify-content: end; gap: 5px 6px; padding: 11px 27px 0 0; line-height: 16px; }
.params label { font-family: "Liberation Sans", "Noto Sans CJK SC", sans-serif; }
.spin { position: relative; height: 16px; background: #646464; border: 1px solid #484848; }
.spin input { display: block; width: 100%; height: 14px; padding-left: 2px; color: #d8d8d8; }
.spin::before, .spin::after { content: ""; position: absolute; right: 3px; border: 2px solid transparent; }
.spin::before { top: 3px; border-bottom: 4px solid #ddd; border-top: 0; }
.spin::after { bottom: 2px; border-top: 4px solid #ddd; border-bottom: 0; }
.vbar { width: 6px; background: #393939; border-radius: 3px; }
.vbar i { height: 222px; background: #515151; border: 1px solid #383838; border-radius: 3px; }

.time { height: 51px; display: grid; grid-template: 24px 27px / 9px 1fr; }
.time > .grip-v { grid-row: 1 / 3; }
.slider { display: flex; gap: 2px; align-items: center; }
.slider button { width: 15px; height: 17px; background: #5a5a5a; border: 1px solid #525252; border-radius: 3px; line-height: 14px; color: #ccc; }
.slider .thumb { width: 124px; font: 11px/14px "Liberation Mono", monospace; }
.track { display: flex; border-top: 1px solid #111; margin-right: 50px; }
.curve { width: 51px; display: grid; place-items: center; }
.curve svg { width: 18px; height: 14px; }
.ticks { flex: 1; min-width: 0; height: 26px; background: #292929; shape-rendering: crispEdges; overflow: visible; }
.ticks text { font: 12px "Liberation Sans", sans-serif; fill: #c8c8c8; }

.status { height: 55px; position: relative; display: flex; padding: 3px 0 0 3px; white-space: nowrap; }
.listener { width: 104px; height: 49px; border-right: 2px solid #222; padding: 1px 3px 1px 0; }
.listener .rec { height: 23px; background: #dcc1c2; border: 2px inset #a8a8a8; }
.listener input { display: block; width: 100%; height: 23px; background: #fff; border: 2px inset #a8a8a8; color: #777; padding-left: 1px; font: 12px/18px "Liberation Mono", "Noto Sans CJK SC", monospace; }
.row { display: flex; align-items: center; }
.info { width: 552px; padding: 2px 0 0 4px; }
.info .row { height: 25px; }
.selinfo { width: 104px; color: #eee; }
.ico { width: 15px; height: 15px; }
.info .ico { margin-right: 12px; }
.info label { display: flex; align-items: center; gap: 1px; margin: 0 16px 0 -3px; width: 73px; font: 11px/16px "Liberation Mono", monospace; color: #ddd; }
.info label input { width: 58px; height: 19px; border: 1px solid #505050; background: #4a4a4a; color: #858585; padding-left: 2px; font-size: 10px; }
.grid { font-family: "Liberation Sans", "Noto Sans CJK SC", sans-serif; color: #eee; }
.prompt { width: 416px; color: #eee; }
.tagbtn { width: 21px; height: 20px; border-radius: 3px; background: #5b83ba; margin-right: 5px; }
.tagbtn svg { width: 21px; height: 20px; }
.tag { font-size: 11px; }
.playback { width: 136px; padding: 2px 0 0 7px; }
.playback .row { height: 22px; justify-content: space-between; padding-right: 16px; }
.playback .row button { width: 16px; height: 16px; }
.playback .row button svg { width: 16px; height: 16px; }
.frame { width: 68px; height: 18px; }
.bigkey { width: 39px; height: 43px; margin-top: 1px; background: #606060; border: 1px solid #575757; border-radius: 4px; }
.bigkey svg { width: 37px; height: 41px; }
.keys { width: 65px; margin: 1px 4px 0 6px; display: flex; flex-direction: column; gap: 3px; }
.keys button, .filters button { height: 20px; background: #5e5e5e; border: 1px solid #585858; border-radius: 3px; line-height: 16px; }
.filters { width: 106px; margin-top: 1px; }
.filters .pick { height: 20px; margin-bottom: 3px; }
.filters .row { gap: 5px; padding-left: 3px; }
.filters button { font-size: 11px; }
.brand { position: absolute; right: 0; top: 4px; width: 139px; height: 45px; opacity: .96; }
```
